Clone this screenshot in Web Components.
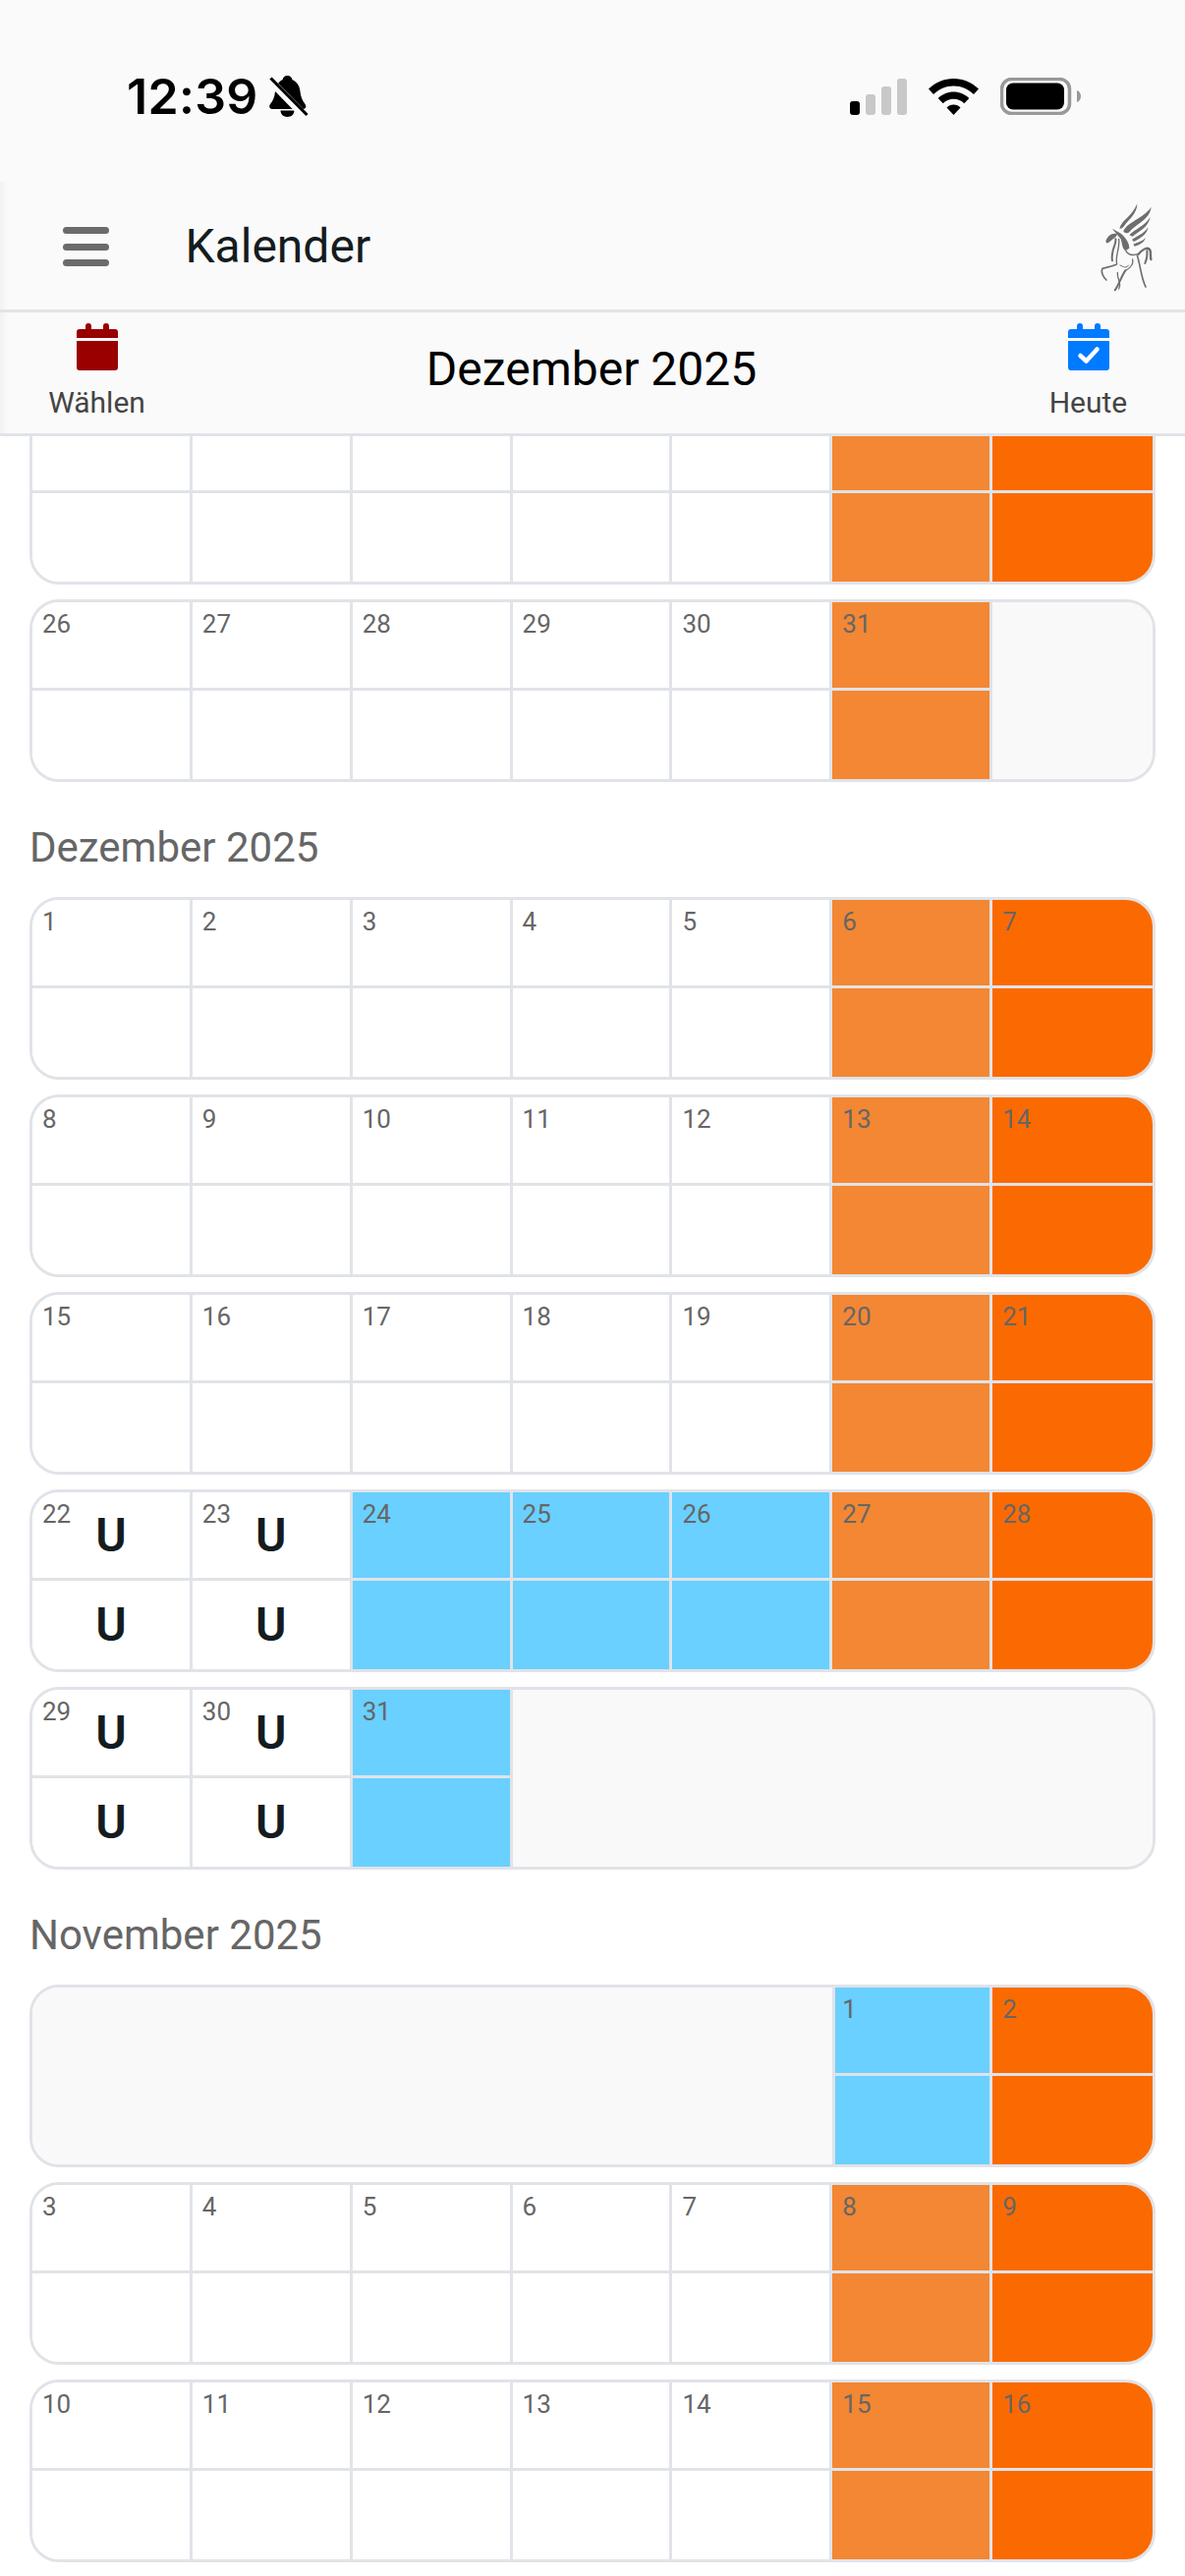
<!DOCTYPE html>
<html lang="de"><head><meta charset="utf-8"><title>Kalender</title>
<style>
html,body{margin:0;padding:0;background:#fff}
body{width:1206px;height:2622px;overflow:hidden;font-family:Roboto,"Liberation Sans",sans-serif;display:flex;flex-direction:column}
</style></head><body>
<status-bar></status-bar>
<app-toolbar title="Kalender"></app-toolbar>
<date-toolbar title="Dezember 2025"></date-toolbar>
<cal-list>
<cal-week data="w w w w w o d"></cal-week>
<cal-week data="w26 w27 w28 w29 w30 o31 e1"></cal-week>
<cal-month title="Dezember 2025">
<cal-week data="w1 w2 w3 w4 w5 o6 d7"></cal-week>
<cal-week data="w8 w9 w10 w11 w12 o13 d14"></cal-week>
<cal-week data="w15 w16 w17 w18 w19 o20 d21"></cal-week>
<cal-week data="u22 u23 b24 b25 b26 o27 d28"></cal-week>
<cal-week data="u29 u30 b31 e4"></cal-week>
</cal-month>
<cal-month title="November 2025">
<cal-week data="e5 B1 d2"></cal-week>
<cal-week data="w3 w4 w5 w6 w7 o8 d9"></cal-week>
<cal-week data="w10 w11 w12 w13 w14 o15 d16"></cal-week>
</cal-month>
</cal-list>
<script>
function def(name, css, html){
  customElements.define(name, class extends HTMLElement{
    connectedCallback(){
      if(this.shadowRoot) return;
      const r=this.attachShadow({mode:'open'});
      r.innerHTML='<style>'+css+'</style>'+(typeof html==='function'?html(this):html);
    }
  });
}
def('status-bar',`
:host{display:flex;align-items:flex-start;height:185px;box-sizing:border-box;padding:77px 106px 0 129px;background:#fafafa;flex:none;justify-content:space-between}
.l,.r{display:flex;align-items:center}
.t{font:600 50px/42px Inter,Roboto,sans-serif;color:#000;letter-spacing:.3px;width:145px}
svg{display:block}
`,`
<div class="l"><span class="t">12:39</span>
<svg width="40" height="42" viewBox="0 0 40 42"><path fill="#000" d="M18.500 0c2.800 0 4.500 1.800 5 4.300 5 2 7.500 6.500 8 12 .5 5 2 9 5 12.700 1.500 2 1 5-2 5H3c-3 0-3.500-3-2-5 3-3.500 4.500-7.500 5-12.700.5-5.500 3-10 7.500-12C14 1.800 15.700 0 18.500 0zM11.500 35.500h14c0 3.700-3 6.500-7 6.500s-7-2.800-7-6.500z"/><path stroke="#fafafa" stroke-width="8" d="M-1 3 37 42"/><path stroke="#000" stroke-width="3.200" d="M1.500 2.500 38.500 40"/><path stroke="#fafafa" stroke-width="1" d="M-1 5.500 36 43"/></svg></div>
<div class="r" style="margin-top:2px">
<svg width="58" height="37" viewBox="0 0 58 37" style="margin-right:22px"><rect x="0" y="23" width="10" height="14" rx="3" fill="#000"/><rect x="16" y="16" width="10" height="21" rx="3" fill="#c8c8c8"/><rect x="32" y="8" width="10" height="29" rx="3" fill="#c8c8c8"/><rect x="48" y="0" width="10" height="37" rx="3" fill="#c8c8c8"/></svg>
<svg width="51" height="37" viewBox="0 0 51 37" style="margin-right:22px"><path fill="#000" d="M25.500 0C35 0 44 4 51 10.500L46 16C40.500 10.800 33.300 7.500 25.500 7.500S10.500 10.800 5 16L0 10.500C7 4 16 0 25.500 0z"/><path fill="#000" d="M25.500 13.500c6 0 11.600 2.400 15.800 6.500l-5 5.300c-2.900-2.800-6.700-4.500-10.800-4.500s-7.900 1.700-10.800 4.500l-5-5.300c4.200-4.100 9.800-6.500 15.800-6.500z"/><path fill="#000" d="M25.500 26.500c2.800 0 5.200 1.100 7 2.900L25.500 37l-7-7.600c1.800-1.800 4.200-2.900 7-2.900z"/></svg>
<svg width="82" height="38" viewBox="0 0 82 38"><rect x="1.500" y="1.500" width="69" height="35" rx="10" fill="none" stroke="#999" stroke-width="3.500"/><rect x="6" y="5.500" width="59" height="27" rx="7" fill="#000"/><path fill="#999" d="M78 13c2.500.8 4 3 4 6s-1.500 5.200-4 6z"/></svg>
</div>`);
def('app-toolbar',`
:host{display:flex;align-items:center;height:133px;box-sizing:border-box;flex:none;background:linear-gradient(90deg,#f2f2f2,#fafafa 8px);border-bottom:3px solid #e0e3e8}
.m{margin-left:63.5px;width:47px;display:flex;flex-direction:column;gap:9.5px;margin-top:2px}
.m i{display:block;height:7px;border-radius:4px;background:#6b6b6b}
.t{margin-left:78px;flex:1;font:400 48px/56px Roboto,sans-serif;color:#141c20;padding-top:2px}
svg{display:block}
`,h=>`<div class="m"><i></i><i></i><i></i></div><div class="t">${h.getAttribute('title')}</div>
<svg width="126" height="120" viewBox="0 0 378 360" fill="#6e6e6e" stroke="none">
<path d="M178 128C186 100 216 92 232 52C232 84 206 100 194 118C188 126 184 130 178 128Z"/>
<path d="M190 136C200 108 250 98 275 62C270 100 234 110 212 134C206 142 196 146 190 136Z"/>
<path d="M208 148C226 128 254 122 272 92C266 124 240 134 218 152Z"/>
<path d="M216 162C232 150 250 146 266 124C260 150 240 158 222 168Z"/>
<path d="M220 176C234 170 246 168 258 156C252 172 238 178 224 182Z"/>
<path d="M156 128L180 142C194 152 208 170 208 188L196 196C186 190 186 172 182 160C174 148 164 140 156 128Z"/>
<path d="M136 166C142 150 154 140 170 144C172 150 164 156 158 160C150 166 144 174 138 172Z"/>
<g fill="none" stroke="#6e6e6e" stroke-linecap="round" stroke-linejoin="round">
<path stroke-width="6" d="M166 160C170 176 150 194 156 226"/>
<path stroke-width="4" d="M176 160C180 190 164 208 170 236"/>
<path stroke-width="5" d="M168 238C150 246 136 246 126 250C120 260 128 276 138 285"/>
<path stroke-width="4" d="M198 196C206 212 220 210 234 206"/>
<path stroke-width="7" d="M236 206C252 188 266 182 272 196C274 206 272 214 274 222"/>
<path stroke-width="6" d="M262 196C264 212 260 224 256 234"/>
<path stroke-width="5" d="M232 210C242 240 244 280 258 306"/>
<path stroke-width="4" d="M218 222C222 238 208 250 196 256"/>
<path stroke-width="6" d="M196 256C182 276 178 298 164 316"/>
<path stroke-width="4" d="M172 262C170 282 186 294 176 312"/>
<path stroke-width="3" d="M180 240C192 246 198 250 206 240"/>
</g>
</svg>`);
const cal=c=>`<svg width="42" height="48" viewBox="0 0 42 48"><rect x="9" y="0" width="6" height="10" rx="3" fill="${c}"/><rect x="27" y="0" width="6" height="10" rx="3" fill="${c}"/><path fill="${c}" d="M0 9a3 3 0 0 1 3-3h36a3 3 0 0 1 3 3v6H0zM0 18h42v27a3 3 0 0 1-3 3H3a3 3 0 0 1-3-3z"/>`;
def('date-toolbar',`
:host{display:flex;align-items:stretch;height:126px;box-sizing:border-box;flex:none;background:linear-gradient(90deg,#f2f2f2,#fafafa 8px);border-bottom:3px solid #e0e3e8;position:relative;z-index:2}
.b{width:197px;display:flex;flex-direction:column;align-items:center;padding-top:11px;box-sizing:border-box;font:400 30px/34px Roboto,sans-serif;color:#444}
.b span{margin-top:16px}
.t{flex:1;text-align:center;font:400 48px/115px Roboto,sans-serif;color:#000;padding-right:2px}
svg{display:block}
`,h=>`<div class="b">${cal('#990000')}</svg><span>Wählen</span></div><div class="t">${h.getAttribute('title')}</div><div class="b">${cal('#007aff')}<path d="M12.500 33l6 5.500 11-12" fill="none" stroke="#fff" stroke-width="4.500" stroke-linecap="round" stroke-linejoin="round"/></svg><span>Heute</span></div>`);
def('cal-list',`
:host{display:flex;flex-direction:column;flex:1;min-height:0;overflow:hidden;padding:0 30px;gap:15px}
::slotted(:first-child){margin-top:-35px}
`,`<slot></slot>`);
def('cal-month',`
:host{display:flex;flex-direction:column;gap:15px}
h2{margin:0;font:400 42px/47px Roboto,sans-serif;color:#666;padding-top:28px;height:59px;display:block}
`,h=>`<h2>${h.getAttribute('title')}</h2><slot></slot>`);
def('cal-day',`
:host{display:grid;grid-template-rows:90px 90px;background:var(--bg,#fff);border-right:3px solid #e0e3e8;position:relative;box-sizing:border-box;color:#666;min-width:0}
:host([last]){border-right:0}
:host([lead]){border-left:3px solid #e0e3e8}
.c{display:flex;align-items:center;justify-content:center;font:600 48px/1 Roboto,sans-serif;color:#141c20;box-sizing:border-box}
.c.a{height:90px;border-bottom:3px solid #e0e3e8}
.n{position:absolute;left:10px;top:7px;font:400 26px/30px Roboto,sans-serif;color:#666}
:host([lead]) .n{left:7px}
`,h=>{const n=h.getAttribute('n')||'',u=h.hasAttribute('u')?'U':'';return `<div class="c a">${u}</div><div class="c">${u}</div>${n?`<span class="n">${n}</span>`:''}`});
def('cal-empty',`
:host{display:block;background:#f9f9f9;grid-column:span var(--span,1)}
`,``);
const col={w:'#fff',o:'#f38733',d:'#fb6a00',b:'#69d0ff',B:'#69d0ff',u:'#fff'};
def('cal-week',`
:host{display:grid;grid-template-columns:repeat(7,1fr);height:186px;box-sizing:border-box;border:3px solid #e0e3e8;border-radius:30px;overflow:hidden;background:#fff;flex:none}
`,h=>{
 const it=h.getAttribute('data').split(' ');
 return it.map((x,i)=>{
  const k=x[0],v=x.slice(1),last=i===it.length-1?' last':'';
  if(k==='e') return `<cal-empty style="--span:${v}"></cal-empty>`;
  return `<cal-day style="--bg:${col[k]}" n="${v}"${k==='u'?' u':''}${k==='B'?' lead':''}${last}></cal-day>`;
 }).join('');
});
</script>
</body></html>
